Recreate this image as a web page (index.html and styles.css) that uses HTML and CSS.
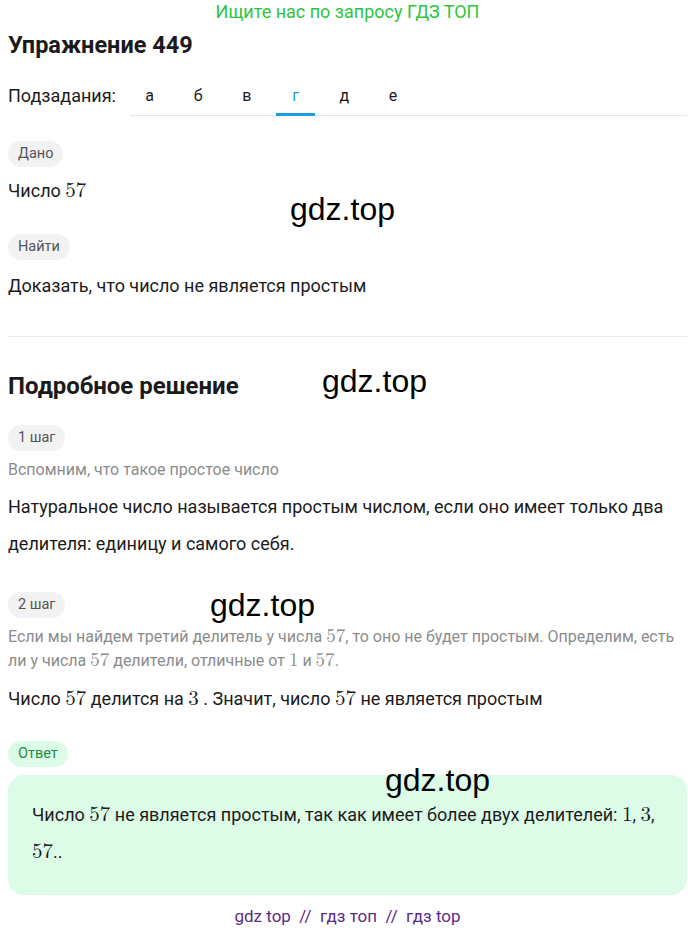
FILE: index.html
```html
<!DOCTYPE html>
<html lang="ru">
<head>
<meta charset="utf-8">
<link rel="stylesheet" href="styles.css">
</head>
<body>
<div class="page">
  <div class="promo">Ищите нас по запросу ГДЗ ТОП</div>
  <h1 class="title">Упражнение 449</h1>
  <div class="subtasks">
    <span class="sub-label">Подзадания:</span>
    <div class="tabs">
      <span class="tab">а</span>
      <span class="tab">б</span>
      <span class="tab">в</span>
      <span class="tab active">г</span>
      <span class="tab">д</span>
      <span class="tab">е</span>
    </div>
  </div>

  <section class="block given">
    <span class="pill">Дано</span>
    <p class="text t-given">Число <span class="m">57</span></p>
    <span class="pill pill-find">Найти</span>
    <p class="text t-find">Доказать, что число не является простым</p>
  </section>

  <hr class="sep">

  <h2 class="sol-title">Подробное решение</h2>

  <section class="block step1">
    <span class="pill">1 шаг</span>
    <p class="hint">Вспомним, что такое простое число</p>
    <p class="text lh">Натуральное число называется простым числом, если оно имеет только два делителя: единицу и самого себя.</p>
  </section>

  <section class="block step2">
    <span class="pill">2 шаг</span>
    <p class="hint">Если мы найдем третий делитель у числа <span class="m">57</span>, то оно не будет простым. Определим, есть ли у числа <span class="m">57</span> делители, отличные от <span class="m">1</span> и <span class="m">57</span>.</p>
    <p class="text t-div">Число <span class="m">57</span> делится на <span class="m">3</span> . Значит, число <span class="m">57</span> не является простым</p>
  </section>

  <section class="block answer">
    <span class="pill pill-green">Ответ</span>
    <div class="answer-box">
      <p class="text lh-box">Число <span class="m">57</span> не является простым, так как имеет более двух делителей: <span class="m">1</span>, <span class="m">3</span>, <span class="m">57</span>..</p>
    </div>
  </section>

  <div class="footer">gdz top &nbsp;//&nbsp; гдз топ &nbsp;//&nbsp; гдз top</div>

  <span class="wm wm1">gdz.top</span>
  <span class="wm wm2">gdz.top</span>
  <span class="wm wm3">gdz.top</span>
  <span class="wm wm4">gdz.top</span>
</div>
</body>
</html>
```

FILE: styles.css
```css
* { box-sizing: border-box; }
html, body { margin: 0; padding: 0; background: #fff; }
body { font-family: Roboto, "Noto Sans", sans-serif; color: #1b1b1b; }
.page { position: relative; padding: 0 8px; width: 695px; }
p { margin: 0; }

.promo { text-align: center; color: #2cc63c; font-size: 18px; line-height: 24px; }
.title { margin: 6px 0 0; font-size: 23.5px; font-weight: 700; line-height: 30px; color: #1b1b1b; }

.subtasks { display: flex; align-items: flex-end; margin-top: 24px; }
.sub-label { font-size: 18px; line-height: 24px; padding-bottom: 8px; width: 122px; flex: none; }
.tabs { flex: 1; display: flex; gap: 9.7px; border-bottom: 1px solid #e6e6e6; }
.tab { width: 39px; text-align: center; font-size: 16px; line-height: 24px; padding-bottom: 5px; border-bottom: 3px solid transparent; margin-bottom: -1px; }
.tab.active { color: #1e9be0; border-bottom-color: #1e9be0; }

.block { display: flex; flex-direction: column; align-items: flex-start; }
.given { margin-top: 25px; }
.pill { display: inline-block; background: #f2f2f3; color: #555; border-radius: 13px; padding: 0 10px; height: 26px; line-height: 26px; font-size: 14.5px; }
.pill-green { background: #dcfce7; color: #1f8a45; }
.text { font-size: 18px; line-height: 24px; color: #1b1b1b; }
.m { font-family: "Latin Modern Math", "DejaVu Serif", "Liberation Serif", serif; font-size: 21px; line-height: 1; }
.t-given { margin-top: 12px; }
.pill-find { margin-top: 31px; }
.t-find { margin-top: 14px; }

.sep { border: 0; border-top: 1px solid #ececec; margin: 38px 0 0; }

.sol-title { margin: 34px 0 0; font-size: 24px; font-weight: 700; line-height: 30px; }

.step1 { margin-top: 24px; }
.hint { color: #8c8c8c; font-size: 16px; line-height: 24px; margin-top: 7px; }
.hint .m { font-size: 19px; }
.lh { line-height: 37px; margin-top: 6px; }
.step2 { margin-top: 30px; }
.t-div { margin-top: 14px; }

.answer { margin-top: 30px; }
.answer-box { align-self: stretch; margin-top: 8px; background: #dcfce8; border-radius: 16px; padding: 21px 20px 25px 24px; }
.lh-box { line-height: 37px; }

.footer { text-align: center; color: #5b2b86; font-size: 17px; margin-top: 9px; line-height: 24px; }

.wm { position: absolute; font-family: "Liberation Sans", Arial, sans-serif; font-size: 32px; color: #000; line-height: 32px; white-space: nowrap; }
.wm1 { left: 290px; top: 193px; }
.wm2 { left: 322px; top: 365px; }
.wm3 { left: 210px; top: 589px; }
.wm4 { left: 385px; top: 764px; }
```
